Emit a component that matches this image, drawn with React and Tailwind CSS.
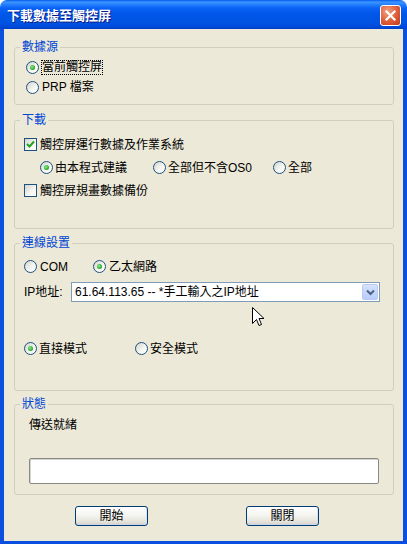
import React from "react";

function Radio({ checked }) {
  return (
    <span className="w-[13px] h-[13px] shrink-0 rounded-full border border-[#1c5180] bg-[linear-gradient(135deg,#d4d4cc,#f4f4f0_55%,#ffffff)] flex items-center justify-center">
      {checked && (
        <span className="w-[5px] h-[5px] rounded-full bg-[radial-gradient(circle_at_40%_40%,#9be89b,#2cb52c_55%,#1a8a1a)]" />
      )}
    </span>
  );
}

function Check({ checked }) {
  return (
    <span className="w-[13px] h-[13px] shrink-0 border border-[#1c5180] bg-[linear-gradient(135deg,#d4d4cc,#f4f4f0_55%,#ffffff)] flex items-center justify-center">
      {checked && (
        <svg width="9" height="9" viewBox="0 0 9 9">
          <path d="M1 4 L3.5 6.5 L8 1.5" stroke="#21a121" strokeWidth="2" fill="none" />
        </svg>
      )}
    </span>
  );
}

function Group({ label, className, children }) {
  return (
    <fieldset className={"border border-[#d0d0bf] rounded-[3px] " + className}>
      <legend className="ml-[5px] px-[2px] text-[12px] leading-[14px] text-[#0046d5]">{label}</legend>
      {children}
    </fieldset>
  );
}

function XPButton({ children }) {
  return (
    <div className="w-[73px] h-[20px] border border-[#003c74] rounded-[3px] bg-[linear-gradient(to_bottom,#ffffff,#f4f4f0_45%,#e6e4dc_80%,#d6d0c5)] shadow-[inset_0_-1px_0_#c9d6f0,inset_-1px_0_0_#d9e2f4] flex items-center justify-center text-[12px] leading-[14px] text-black">
      {children}
    </div>
  );
}

export default function App() {
  return (
    <div className="relative w-[407px] h-[544px] bg-white font-['Liberation_Sans','Noto_Sans_CJK_TC',sans-serif] text-black text-[12px]">
      {/* Title bar */}
      <div className="h-[29px] rounded-t-[7px] bg-[linear-gradient(to_bottom,#0058ee_0px,#3d95ff_2px,#2a85ff_4px,#0a63f5_8px,#0056e8_14px,#0054e3_22px,#0049d8_27px,#003fc8_29px)] flex items-center justify-between pl-[7px] pr-[6px] pt-[2px]">
        <span className="text-[13px] leading-[15px] font-bold text-white [text-shadow:1px_1px_#0a1883] tracking-[0px]">
          下載數據至觸控屏
        </span>
        <div className="w-[21px] h-[21px] rounded-[3px] border border-white bg-[radial-gradient(circle_at_35%_30%,#f2a184,#e0613c_50%,#c4381a)] flex items-center justify-center">
          <svg width="13" height="13" viewBox="0 0 13 13">
            <path d="M2.5 2.5 L10.5 10.5 M10.5 2.5 L2.5 10.5" stroke="white" strokeWidth="2.2" strokeLinecap="square" />
          </svg>
        </div>
      </div>

      {/* Client */}
      <div className="h-[515px] bg-[#ece9d8] border-l-4 border-r-4 border-b-[3px] border-[#0a4fe0] flex flex-col pl-[10px] pr-[9px]">
        {/* 數據源 */}
        <Group label="數據源" className="mt-[11px] h-[65px]">
          <div className="pt-[3px] pl-[11px]">
            <div className="h-[20px] flex items-center gap-[2px]">
              <Radio checked />
              <span className="border border-dotted border-black leading-[13px] px-[0px]">當前觸控屏</span>
            </div>
            <div className="h-[20px] flex items-center gap-[3px]">
              <Radio />
              <span className="leading-[14px]">PRP 檔案</span>
            </div>
          </div>
        </Group>

        {/* 下載 */}
        <Group label="下載" className="mt-[8px] h-[116px]">
          <div className="pt-[6px]">
            <div className="h-[23px] pl-[9px] flex items-center gap-[3px]">
              <Check checked />
              <span className="leading-[14px]">觸控屏運行數據及作業系統</span>
            </div>
            <div className="h-[23px] pl-[25px] flex items-center">
              <div className="w-[113px] flex items-center gap-[2px]">
                <Radio checked />
                <span className="leading-[14px]">由本程式建議</span>
              </div>
              <div className="w-[120px] flex items-center gap-[2px]">
                <Radio />
                <span className="leading-[14px]">全部但不含OS0</span>
              </div>
              <div className="flex items-center gap-[2px]">
                <Radio />
                <span className="leading-[14px]">全部</span>
              </div>
            </div>
            <div className="h-[23px] pl-[9px] flex items-center gap-[3px]">
              <Check />
              <span className="leading-[14px]">觸控屏規畫數據備份</span>
            </div>
          </div>
        </Group>

        {/* 連線設置 */}
        <Group label="連線設置" className="mt-[7px] h-[155px]">
          <div className="pt-[7px] pl-[9px]">
            <div className="h-[19px] flex items-center">
              <div className="w-[69px] flex items-center gap-[3px]">
                <Radio />
                <span className="leading-[14px]">COM</span>
              </div>
              <div className="flex items-center gap-[3px]">
                <Radio checked />
                <span className="leading-[14px]">乙太網路</span>
              </div>
            </div>
            <div className="mt-[6px] h-[20px] flex items-center">
              <span className="w-[47px] leading-[14px]">IP地址:</span>
              <div className="w-[309px] h-[20px] border border-[#7f9db9] bg-white flex items-center pl-[3px] pr-[1px]">
                <span className="flex-1 leading-[14px] whitespace-nowrap">61.64.113.65 -- *手工輸入之IP地址</span>
                <div className="w-[16px] h-[16px] rounded-[2px] border border-[#b9cbf3] bg-[linear-gradient(to_bottom,#d6e2fd,#b8cdfa)] flex items-center justify-center">
                  <svg width="9" height="7" viewBox="0 0 9 7">
                    <path d="M1 1.5 L4.5 5 L8 1.5" stroke="#4d6185" strokeWidth="2" fill="none" />
                  </svg>
                </div>
              </div>
            </div>
            <div className="mt-[37px] h-[19px] flex items-center">
              <div className="w-[111px] flex items-center gap-[2px]">
                <Radio checked />
                <span className="leading-[14px]">直接模式</span>
              </div>
              <div className="flex items-center gap-[2px]">
                <Radio />
                <span className="leading-[14px]">安全模式</span>
              </div>
            </div>
          </div>
        </Group>

        {/* 狀態 */}
        <Group label="狀態" className="mt-[6px] h-[98px]">
          <div className="pt-[6px] pl-[14px]">
            <div className="h-[16px] flex items-center leading-[14px]">傳送就緒</div>
            <div className="mt-[25px] w-[350px] h-[26px] rounded-[2px] border border-[#8a8a85] bg-white shadow-[inset_1px_1px_0_#d6d6d0]" />
          </div>
        </Group>

        {/* Buttons */}
        <div className="mt-[11px] pl-[61px] flex gap-[98px]">
          <XPButton>開始</XPButton>
          <XPButton>關閉</XPButton>
        </div>
      </div>

      {/* Mouse cursor */}
      <svg className="absolute left-[252px] top-[307px]" width="13" height="20" viewBox="0 0 13 20">
        <path d="M0.5 0.5 L0.5 16.5 L4.5 12.5 L7 18.5 L9.5 17.5 L7 11.5 L12 11.5 Z" fill="white" stroke="black" strokeWidth="1" strokeLinejoin="miter" />
      </svg>
    </div>
  );
}
